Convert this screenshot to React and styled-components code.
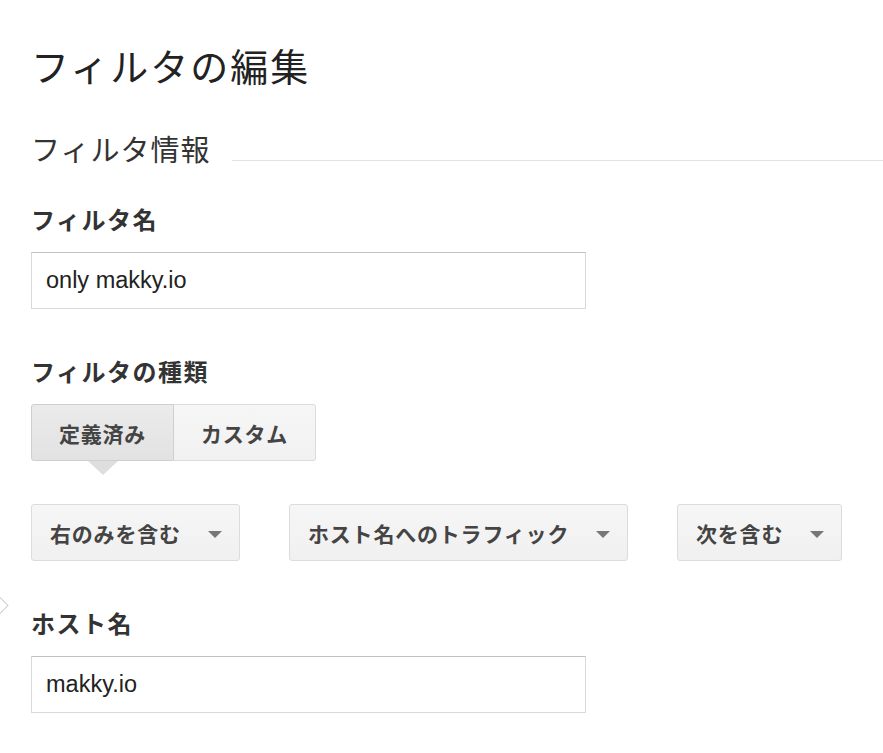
import React from 'react'
import styled, { createGlobalStyle } from 'styled-components'

const GlobalStyle = createGlobalStyle`
    body {
        margin: 0;
        background: #fff;
        font-family: "Noto Sans CJK JP", "Liberation Sans", sans-serif;
        color: #333;
    }
`;

const Page = styled.div`
    position: relative;
    padding: 42px 0 40px 31px;
    overflow: hidden;
`;

const Title = styled.h1`
    margin: 0;
    font-size: 38px;
    line-height: 46px;
    font-weight: 400;
    letter-spacing: 2px;
    color: #222;
`;

const SectionRow = styled.div`
    display: flex;
    align-items: flex-end;
    margin-top: 42px;
`;

const SectionTitle = styled.h2`
    margin: 0;
    font-size: 29px;
    line-height: 36px;
    font-weight: 400;
    letter-spacing: 1px;
    color: #333;
    white-space: nowrap;
`;

const Rule = styled.div`
    flex: 1;
    height: 1px;
    background: #e3e3e3;
    margin: 0 0 5px 22px;
`;

const Field = styled.div`
    margin-top: ${p => p.$top}px;
`;

const Label = styled.div`
    font-size: 24px;
    line-height: 30px;
    font-weight: 700;
    letter-spacing: 1.5px;
    color: #333;
    margin-bottom: 18px;
`;

const TextBox = styled.div`
    box-sizing: border-box;
    width: 555px;
    height: 57px;
    border: 1px solid #d9d9d9;
    border-top-color: #c0c0c0;
    display: flex;
    align-items: center;
    padding-left: 14px;
    font-family: "Liberation Sans", "Noto Sans CJK JP", sans-serif;
    font-size: 23.5px;
    color: #222;
`;

const Segmented = styled.div`
    display: flex;
`;

const Segment = styled.div`
    position: relative;
    box-sizing: border-box;
    height: 57px;
    width: ${p => p.$w}px;
    display: flex;
    align-items: center;
    justify-content: center;
    font-size: 21px;
    font-weight: 700;
    letter-spacing: 0.8px;
    color: #444;
    border: 1px solid ${p => (p.$active ? '#cfcfcf' : '#dcdcdc')};
    background: ${p => (p.$active ? 'linear-gradient(#ebebeb, #e2e2e2)' : 'linear-gradient(#f6f6f6, #f1f1f1)')};
    border-radius: ${p => (p.$first ? '3px 0 0 3px' : '0 3px 3px 0')};
    ${p => !p.$first && 'border-left: none;'}

    &::after {
        content: '';
        display: ${p => (p.$active ? 'block' : 'none')};
        position: absolute;
        left: 50%;
        bottom: -15px;
        margin-left: -15px;
        border-left: 15px solid transparent;
        border-right: 15px solid transparent;
        border-top: 14px solid #dedede;
    }
`;

const DropRow = styled.div`
    display: flex;
    gap: 49px;
    margin-top: 43px;
`;

const Dropdown = styled.div`
    box-sizing: border-box;
    height: 57px;
    width: ${p => p.$w}px;
    display: flex;
    align-items: center;
    justify-content: space-between;
    padding: 0 17px 0 18px;
    border: 1px solid #dcdcdc;
    border-radius: 3px;
    background: linear-gradient(#f6f6f6, #f0f0f0);
    font-size: 21px;
    font-weight: 700;
    letter-spacing: 0.8px;
    color: #444;
    white-space: nowrap;
`;

const Caret = styled.span`
    width: 0;
    height: 0;
    border-left: 7px solid transparent;
    border-right: 7px solid transparent;
    border-top: 7px solid #777;
    margin-top: 4px;
`;

const SideMarker = styled.div`
    position: absolute;
    left: -7px;
    top: 599px;
    width: 11px;
    height: 11px;
    border: 1px solid #d0d0d0;
    background: #fff;
    transform: rotate(45deg);
`;

const dropdowns = [
    { label: '右のみを含む', w: 209 },
    { label: 'ホスト名へのトラフィック', w: 339 },
    { label: '次を含む', w: 165 },
];

const App = () => {
  return (
    <Page>
        <GlobalStyle />
        <SideMarker />
        <Title>フィルタの編集</Title>
        <SectionRow>
            <SectionTitle>フィルタ情報</SectionTitle>
            <Rule />
        </SectionRow>
        <Field $top={38}>
            <Label>フィルタ名</Label>
            <TextBox>only makky.io</TextBox>
        </Field>
        <Field $top={47}>
            <Label>フィルタの種類</Label>
            <Segmented>
                <Segment $active $first $w={143}>定義済み</Segment>
                <Segment $w={142}>カスタム</Segment>
            </Segmented>
        </Field>
        <DropRow>
            {dropdowns.map(d => (
                <Dropdown key={d.label} $w={d.w}>
                    {d.label}
                    <Caret />
                </Dropdown>
            ))}
        </DropRow>
        <Field $top={47}>
            <Label>ホスト名</Label>
            <TextBox>makky.io</TextBox>
        </Field>
    </Page>
  )
}

export default App
